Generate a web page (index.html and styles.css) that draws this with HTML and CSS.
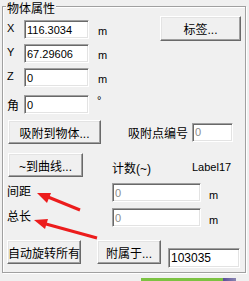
FILE: index.html
```html
<!DOCTYPE html>
<html lang="zh-CN">
<head>
  <meta charset="UTF-8" />
  <title>物体属性</title>
  <link rel="stylesheet" href="styles.css">
</head>
<body>
  <!-- 物体属性 -->
  <div class="group">
    <div class="legend">物体属性</div>
    <div class="inner">
      <div class="top">
        <div class="coords">
          <div class="row">
            <span class="lbl lat">X</span>
            <input class="box" type="text" value="116.3034" />
            <span class="unit">m</span>
          </div>
          <div class="row row-y">
            <span class="lbl lat">Y</span>
            <input class="box" type="text" value="67.29606" />
            <span class="unit">m</span>
          </div>
          <div class="row row-y">
            <span class="lbl lat">Z</span>
            <input class="box" type="text" value="0" />
            <span class="unit">m</span>
          </div>
          <div class="row row-a">
            <span class="lbl cjk">角</span>
            <input class="box" type="text" value="0" />
            <span class="deg">°</span>
          </div>
        </div>
        <button class="btn btn-tag">标签...</button>
      </div>

      <div class="line line-snap">
        <button class="btn btn-snap">吸附到物体...</button>
        <span class="snap-lbl">吸附点编号</span>
        <input class="box box-snap" type="text" value="0" disabled />
      </div>

      <div class="line line-curve">
        <button class="btn btn-curve">~到曲线...</button>
        <span class="count">计数(~)</span>
        <span class="label17">Label17</span>
      </div>

      <div class="line line-field">
        <span class="field-lbl">间距</span>
        <input class="box box-wide" type="text" value="0" disabled />
        <span class="unit">m</span>
      </div>
      <div class="line line-field">
        <span class="field-lbl">总长</span>
        <input class="box box-wide" type="text" value="0" disabled />
        <span class="unit">m</span>
      </div>

      <div class="line line-bottom">
        <button class="btn btn-rotate">自动旋转所有</button>
        <button class="btn btn-attach">附属于...</button>
        <input class="box box-id" type="text" value="103035" />
      </div>
    </div>
  </div>

  <div class="strip">
    <span class="strip-green"></span>
    <span class="strip-purple"></span>
  </div>

  <!-- 标注箭头 -->
  <svg class="arrows" width="249" height="281" viewBox="0 0 249 281">
    <line x1="80" y1="210" x2="48" y2="197" stroke="#ec1c1c" stroke-width="3" />
    <polygon points="37,193 51,193 47,203" fill="#ec1c1c" />
    <line x1="97" y1="238" x2="46" y2="224" stroke="#ec1c1c" stroke-width="3" />
    <polygon points="34,220 48,219 45,229" fill="#ec1c1c" />
  </svg>
</body>
</html>
```

FILE: styles.css
```css
body {
  margin: 0;
  width: 249px;
  height: 281px;
  background: #f0f0f0;
  font-family: "Liberation Sans", "Noto Sans CJK SC", sans-serif;
  font-size: 12px;
  color: #000;
  overflow: hidden;
  position: relative;
}

.group {
  margin: 6px 0 0 2px;
  width: 242px;
  height: 265px;
  border: 1px solid #a0a0a0;
  box-shadow: inset 1px 1px #fff, 1px 1px #fff;
}

.legend {
  width: fit-content;
  height: 14px;
  margin: -6px 0 -1px 3px;
  padding: 0 1px;
  line-height: 14px;
  background: #f0f0f0;
  font-family: "Noto Sans CJK SC", sans-serif;
}

.inner {
  padding-left: 4px;
}

/* inputs / buttons */
.box {
  box-sizing: border-box;
  height: 19px;
  margin: 0;
  padding: 0 2px;
  border: 1px solid;
  border-color: #a0a0a0 #fff #fff #a0a0a0;
  box-shadow: inset 1px 1px #696969, inset -1px -1px #e3e3e3;
  background: #fff;
  font-family: "Liberation Sans", sans-serif;
  font-size: 11px;
  color: #000;
  outline: none;
}

.box:disabled {
  color: #8a8a8a;
  background: #fff;
}

.btn {
  box-sizing: border-box;
  height: 24px;
  margin: 0;
  padding: 0;
  border: 1px solid;
  border-color: #fff #696969 #696969 #fff;
  box-shadow: inset -1px -1px #a0a0a0, inset 1px 1px #e3e3e3;
  background: #f0f0f0;
  font-family: "Liberation Sans", "Noto Sans CJK SC", sans-serif;
  font-size: 12px;
  color: #000;
}

/* top block */
.top {
  display: flex;
  align-items: flex-start;
}

.coords {
  margin-top: 6px;
}

.row {
  display: flex;
  align-items: flex-start;
  height: 19px;
}

.row-y {
  margin-top: 5px;
}

.row-a {
  margin-top: 8px;
}

.lbl {
  width: 17px;
}

.lat {
  font-size: 11px;
  line-height: 15px;
  margin-top: 1px;
}

.cjk {
  font-family: "Noto Sans CJK SC", sans-serif;
  line-height: 19px;
}

.row .box {
  width: 65px;
}

.unit {
  margin: 4px 0 0 9px;
  font-size: 11px;
  line-height: 15px;
}

.deg {
  margin-left: 8px;
  font-size: 11px;
  line-height: 11px;
}

.btn-tag {
  width: 81px;
  height: 25px;
  margin: 2px 4px 0 auto;
}

/* rows below */
.line {
  display: flex;
  align-items: center;
}

.line-snap {
  margin-top: 6px;
}

.btn-snap {
  width: 93px;
  margin-left: 1px;
}

.snap-lbl {
  margin-left: 27px;
  width: 64px;
}

.box-snap {
  width: 41px;
}

.line-curve {
  height: 24px;
  margin-top: 9px;
}

.btn-curve {
  width: 75px;
  margin-left: 1px;
}

.count {
  margin: 4px 0 0 29px;
  width: 80px;
}

.label17 {
  margin-top: 4px;
  font-size: 11px;
}

.line-field {
  height: 19px;
  margin-top: 6px;
  align-items: flex-start;
}

.field-lbl {
  width: 105px;
  line-height: 19px;
}

.box-wide {
  width: 89px;
}

.line-field .unit {
  margin: 5px 0 0 8px;
}

.line-bottom {
  height: 24px;
  margin-top: 13px;
  align-items: flex-start;
}

.btn-rotate {
  width: 74px;
}

.btn-attach {
  width: 64px;
  margin-left: 16px;
}

.box-id {
  width: 72px;
  height: 20px;
  margin: 8px 0 0 7px;
  font-size: 12px;
}

/* bottom strip */
.strip {
  display: flex;
  margin: 5px 0 0 141px;
  height: 3px;
}

.strip-green {
  width: 82px;
  background: #7cc242;
}

.strip-purple {
  width: 13px;
  background: linear-gradient(90deg, #5a4f9c, #8a86b0);
}

.arrows {
  position: absolute;
  left: 0;
  top: 0;
  pointer-events: none;
}
```
